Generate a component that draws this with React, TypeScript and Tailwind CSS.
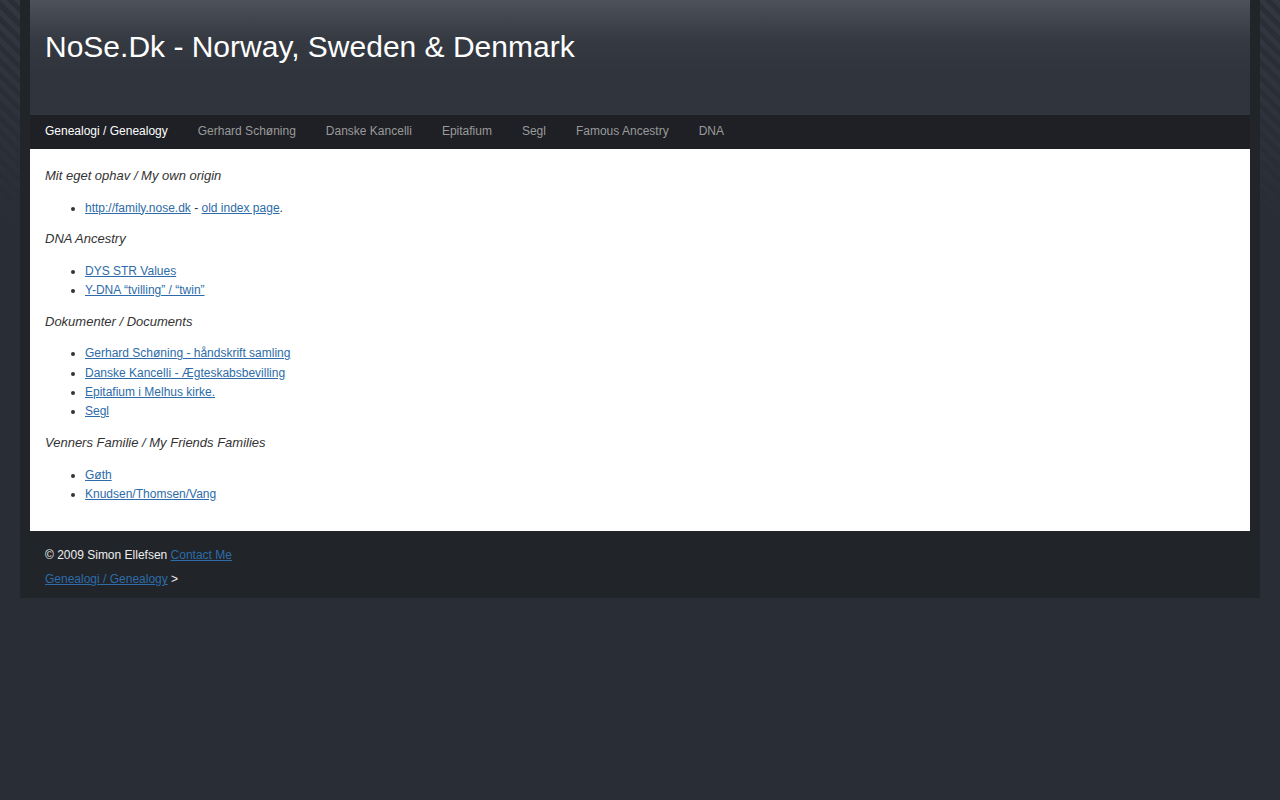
export default function App() {
  const nav = [
    "Genealogi / Genealogy",
    "Gerhard Schøning",
    "Danske Kancelli",
    "Epitafium",
    "Segl",
    "Famous Ancestry",
    "DNA",
  ];
  const link = "text-[#2d6ca8] underline";
  return (
    <div
      className="min-h-[800px] w-full px-[20px] font-['Liberation_Sans',Arial,sans-serif] [background:linear-gradient(to_bottom,rgba(41,45,54,0)_0px,#292d36_230px),repeating-linear-gradient(45deg,#2a2e37_0px,#2a2e37_5px,#333741_5px,#333741_10px),#292d36]"
    >
      <div className="bg-[#212429] px-[10px]">
        <header className="h-[115px] bg-[linear-gradient(to_bottom,#4d515a_0px,#353941_40px,#30343c_70px,#30343c_115px)] px-[15px] pt-[27px]">
          <h1 className="text-[30px] leading-[40px] text-white">NoSe.Dk - Norway, Sweden &amp; Denmark</h1>
        </header>
        <nav className="flex h-[34px] items-center bg-[#1e2025] pb-[2px]">
          {nav.map((n, i) => (
            <a
              key={n}
              className={`px-[15px] text-[12px] ${i === 0 ? "text-white" : "text-[#9a9a9a]"}`}
            >
              {n}
            </a>
          ))}
        </nav>
        <main className="bg-white px-[15px] pt-[17px] pb-[15.5px] text-[#333]">
          <p className="mb-[13.5px] text-[13px] italic leading-[19px]">Mit eget ophav / My own origin</p>
          <ul className="mb-[11.5px] list-disc pl-[40px] text-[12px] leading-[19.33px]">
            <li>
              <a className={link}>http://family.nose.dk</a> - <a className={link}>old index page</a>.
            </li>
          </ul>
          <p className="mb-[13.5px] text-[13px] italic leading-[19px]">DNA Ancestry</p>
          <ul className="mb-[11.5px] list-disc pl-[40px] text-[12px] leading-[19.33px]">
            <li>
              <a className={link}>DYS STR Values</a>
            </li>
            <li>
              <a className={link}>Y-DNA “tvilling” / “twin”</a>
            </li>
          </ul>
          <p className="mb-[13.5px] text-[13px] italic leading-[19px]">Dokumenter / Documents</p>
          <ul className="mb-[11.5px] list-disc pl-[40px] text-[12px] leading-[19.33px]">
            <li>
              <a className={link}>Gerhard Schøning - håndskrift samling</a>
            </li>
            <li>
              <a className={link}>Danske Kancelli - Ægteskabsbevilling</a>
            </li>
            <li>
              <a className={link}>Epitafium i Melhus kirke.</a>
            </li>
            <li>
              <a className={link}>Segl</a>
            </li>
          </ul>
          <p className="mb-[13.5px] text-[13px] italic leading-[19px]">Venners Familie / My Friends Families</p>
          <ul className="mb-[11.5px] list-disc pl-[40px] text-[12px] leading-[19.33px]">
            <li>
              <a className={link}>Gøth</a>
            </li>
            <li>
              <a className={link}>Knudsen/Thomsen/Vang</a>
            </li>
          </ul>
        </main>
        <footer className="px-[15px] pt-[15px] pb-[10px] text-[12px] leading-[18px] text-[#eeeeee]">
          <p>
            © 2009 Simon Ellefsen <a className={link}>Contact Me</a>
          </p>
          <p className="mt-[6px]">
            <a className={link}>Genealogi / Genealogy</a> &gt;
          </p>
        </footer>
      </div>
    </div>
  );
}
